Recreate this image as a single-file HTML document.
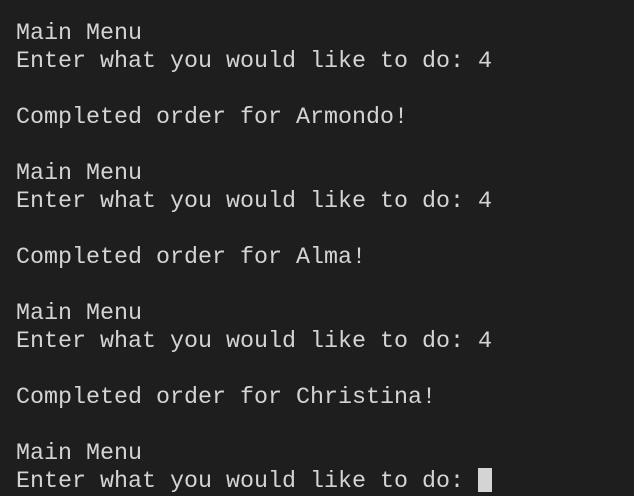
<!DOCTYPE html>
<html><head><style>
html,body{margin:0;padding:0;background:#1e1e1e;width:634px;height:488px;overflow:hidden}
pre{margin:0;position:absolute;left:16px;top:20px;font-family:"Liberation Mono",monospace;font-size:23.33px;line-height:28px;color:#d4d4d4}
.cur{display:inline-block;width:14px;height:24px;background:#d4d4d4;vertical-align:-5px}
</style></head><body>
<pre>Main Menu
Enter what you would like to do: 4

Completed order for Armondo!

Main Menu
Enter what you would like to do: 4

Completed order for Alma!

Main Menu
Enter what you would like to do: 4

Completed order for Christina!

Main Menu
Enter what you would like to do: <span class="cur"></span></pre>
</body></html>
